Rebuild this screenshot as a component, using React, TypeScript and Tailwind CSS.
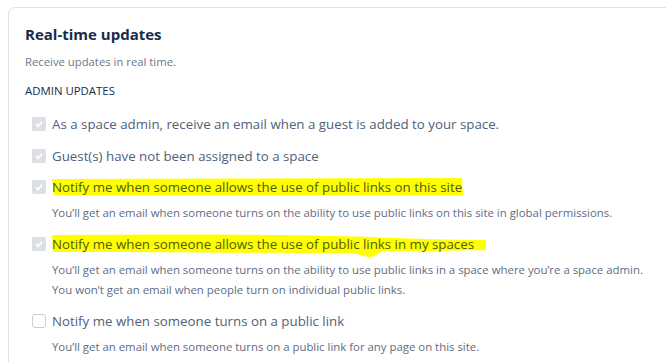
import type { ReactNode } from "react";

const FONT = { fontFamily: '"Open Sans", "Noto Sans", sans-serif' };

function Checkbox({ checked }: { checked: boolean }) {
  if (!checked) {
    return (
      <span className="mt-[3px] inline-block h-[14px] w-[14px] shrink-0 rounded-[3px] border border-[#c9ced6] bg-white" />
    );
  }
  return (
    <span className="mt-[3px] flex h-[14px] w-[14px] shrink-0 items-center justify-center rounded-[2px] bg-[#dcdfe4]">
      <svg width="10" height="10" viewBox="0 0 10 10">
        <path d="M1.8 5.2 L4 7.4 L8.3 2.6" fill="none" stroke="#ffffff" strokeWidth="1.8" />
      </svg>
    </span>
  );
}

function Marker({ variant }: { variant: 1 | 2 }) {
  if (variant === 1) {
    return (
      <svg className="absolute left-0 top-[1px]" width="414" height="18" viewBox="0 0 414 18">
        <path d="M0 1 L410 0 L411 17 L2 17 Z" fill="#ffff00" />
      </svg>
    );
  }
  return (
    <svg className="absolute left-0 top-0" width="436" height="26" viewBox="0 0 436 26">
      <path
        d="M0 1 C120 0 230 0 318 3 C360 5 400 6 434 6 L434 16 C400 17 360 17 330 17 C325 21 320 24 316 23 L300 19 C200 19 90 18 1 18 Z"
        fill="#ffff00"
      />
    </svg>
  );
}

function Option({
  checked,
  label,
  marker,
  children,
}: {
  checked: boolean;
  label: string;
  marker?: 1 | 2;
  children?: ReactNode;
}) {
  return (
    <div className="flex gap-[6px] pl-[7px]">
      <Checkbox checked={checked} />
      <div>
        <div className="relative isolate text-[13.3px] leading-[20px]">
          {marker && <Marker variant={marker} />}
          <span className={`relative ${marker ? "text-[#4f5a12]" : "text-[#505f79]"}`}>{label}</span>
        </div>
        {children && (
          <div className="mt-[6px] text-[11.4px] leading-[20px] text-[#5e6c84]">{children}</div>
        )}
      </div>
    </div>
  );
}

export default function App() {
  return (
    <div className="h-[362px] w-[666px] overflow-hidden bg-white" style={FONT}>
      <div className="ml-2 mt-[7px] h-[400px] w-[700px] rounded-tl-[7px] border border-[#dfe1e6] bg-white pl-4 pt-[16px]">
        <h2 className="text-[15px] font-bold leading-[20px] text-[#172b4d]">Real-time updates</h2>
        <p className="mt-[10px] text-[11.3px] leading-[16px] text-[#6b778c]">Receive updates in real time.</p>
        <p className="mt-[13px] text-[11.4px] leading-[16px] text-[#172b4d]">ADMIN UPDATES</p>

        <div className="mt-[15px] flex flex-col gap-[12px]">
          <Option checked label="As a space admin, receive an email when a guest is added to your space." />
          <Option checked label="Guest(s) have not been assigned to a space" />
          <div className="-mt-[1px] flex flex-col gap-[11px]">
            <Option checked marker={1} label="Notify me when someone allows the use of public links on this site">
              You’ll get an email when someone turns on the ability to use public links on this site in global permissions.
            </Option>
            <Option checked marker={2} label="Notify me when someone allows the use of public links in my spaces">
              <div>You’ll get an email when someone turns on the ability to use public links in a space where you’re a space admin.</div>
              <div>You won’t get an email when people turn on individual public links.</div>
            </Option>
            <Option checked={false} label="Notify me when someone turns on a public link">
              You’ll get an email when someone turns on a public link for any page on this site.
            </Option>
          </div>
        </div>
      </div>
    </div>
  );
}
